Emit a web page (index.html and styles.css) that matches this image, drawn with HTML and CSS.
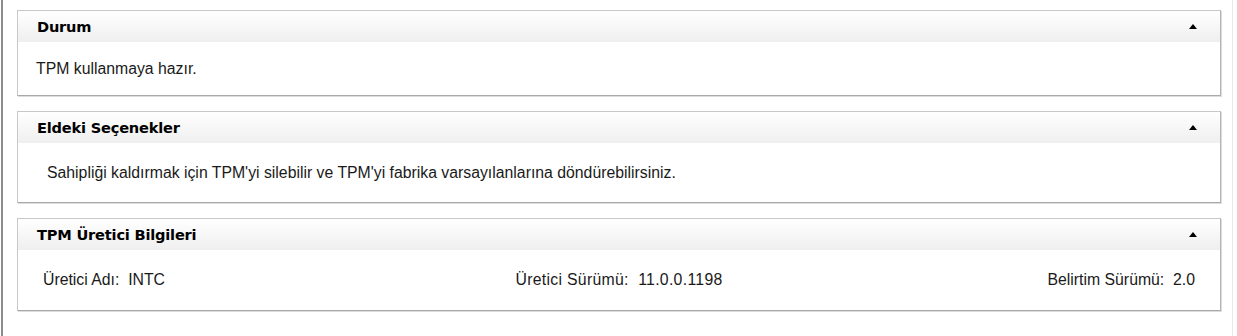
FILE: index.html
```html
<!DOCTYPE html>
<html lang="tr">
<head>
  <meta charset="UTF-8">
  <title>TPM Yönetimi</title>
  <link rel="stylesheet" href="styles.css">
</head>
<body>
  <div class="frame">

    <div class="panel">
      <div class="panel-head">
        <span class="panel-title">Durum</span>
        <svg class="collapse" width="8" height="5" viewBox="0 0 8 5"><path d="M0 5 L4 0 L8 5 Z" fill="#000"/></svg>
      </div>
      <div class="panel-body status">
        <span>TPM kullanmaya hazır.</span>
      </div>
    </div>

    <div class="panel">
      <div class="panel-head">
        <span class="panel-title">Eldeki Seçenekler</span>
        <svg class="collapse" width="8" height="5" viewBox="0 0 8 5"><path d="M0 5 L4 0 L8 5 Z" fill="#000"/></svg>
      </div>
      <div class="panel-body options">
        <span>Sahipliği kaldırmak için TPM'yi silebilir ve TPM'yi fabrika varsayılanlarına döndürebilirsiniz.</span>
      </div>
    </div>

    <div class="panel">
      <div class="panel-head">
        <span class="panel-title">TPM Üretici Bilgileri</span>
        <svg class="collapse" width="8" height="5" viewBox="0 0 8 5"><path d="M0 5 L4 0 L8 5 Z" fill="#000"/></svg>
      </div>
      <div class="panel-body info">
        <span class="info-left">Üretici Adı:&nbsp; INTC</span>
        <span class="info-mid">Üretici Sürümü:&nbsp; 11.0.0.1198</span>
        <span class="info-right">Belirtim Sürümü:&nbsp; 2.0</span>
      </div>
    </div>

  </div>
</body>
</html>
```

FILE: styles.css
```css
body {
  margin: 0;
  background: #fff;
  font-family: "Liberation Sans", Arial, sans-serif;
  color: #1a1a1a;
}
.frame {
  margin-left: 1px;
  width: 1232px;
  height: 336px;
  border-left: 2px solid #8c8c8c;
  border-right: 1px solid #e8e8e8;
  padding: 10px 11px 0 14px;
  box-sizing: border-box;
  display: flex;
  flex-direction: column;
  gap: 15px;
}
.panel {
  border: 1px solid #c8c8c8;
  border-bottom-color: #a9a9a9;
  border-right-color: #b4b4b4;
  box-shadow: 1px 1px 0 #dcdcdc;
}
.panel-head {
  height: 31px;
  display: flex;
  align-items: center;
  justify-content: space-between;
  padding: 0 23px 0 19px;
  background: linear-gradient(#ffffff, #efefef);
}
.panel-title {
  font-family: "DejaVu Sans", Verdana, sans-serif;
  font-weight: bold;
  font-size: 14.6px;
  color: #000;
  letter-spacing: -0.2px;
}
.collapse {
  display: block;
}
.panel-body {
  display: flex;
  align-items: center;
  font-size: 15.8px;
}
.status {
  height: 53px;
  padding-left: 18px;
}
.options {
  height: 59px;
  padding-left: 29px;
}
.info {
  display: grid;
  grid-template-columns: 1fr auto 1fr;
  height: 60px;
  padding: 0 25px;
}
.info-mid {
  letter-spacing: 0.3px;
}
.info-right {
  justify-self: end;
}
```
